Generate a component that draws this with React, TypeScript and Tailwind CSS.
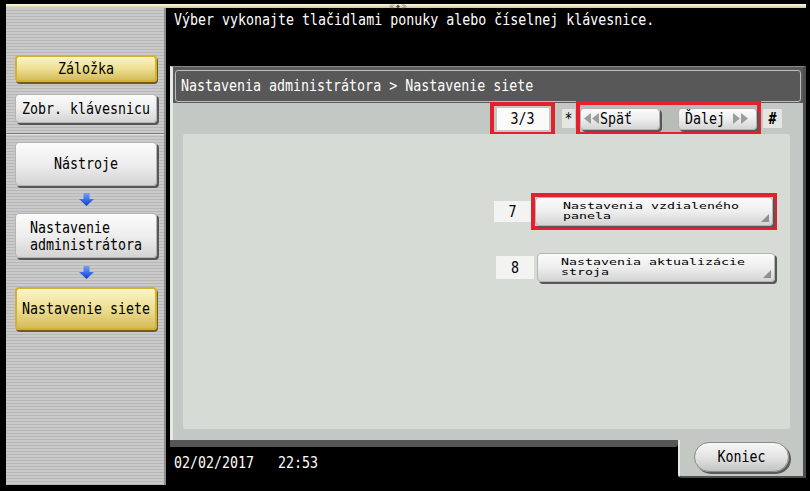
import React from "react";

const tall = "inline-block scale-y-[1.15]";

function BlueArrow() {
  return (
    <svg width="15" height="13" viewBox="0 0 15 13">
      <defs>
        <linearGradient id="ba" x1="0" y1="0" x2="0" y2="1">
          <stop offset="0" stopColor="#6fa0ff" />
          <stop offset="1" stopColor="#0a3fd0" />
        </linearGradient>
      </defs>
      <path d="M4.5 0h6v6h4.5L7.5 13 0 6h4.5z" fill="url(#ba)" />
    </svg>
  );
}

function DoubleArrow({ dir }: { dir: "left" | "right" }) {
  return (
    <svg width="15" height="11" viewBox="0 0 15 11">
      {dir === "left" ? (
        <path d="M7 0L0 5.5 7 11z M15 0L8 5.5 15 11z" fill="#9b9d9b" />
      ) : (
        <path d="M0 0l7 5.5L0 11z M8 0l7 5.5L8 11z" fill="#9b9d9b" />
      )}
    </svg>
  );
}

function Corner() {
  return (
    <svg className="absolute right-[3px] bottom-[3px]" width="8" height="8" viewBox="0 0 8 8">
      <path d="M8 0v8H0z" fill="#8e908e" />
    </svg>
  );
}

const grayBtn =
  "bg-linear-to-b from-[#fbfbfb] via-[#eeeeee] to-[#d4d4d4] border border-[#b4b4b4] rounded-[4px] shadow-[2px_2px_0_#575757]";
const yellowBtn =
  "bg-linear-to-b from-[#fbf4c4] via-[#eedf94] to-[#d4bc58] border-2 border-[#d3b232] rounded-[4px] shadow-[1px_2px_0_#6b5d1c]";

function MenuButton({ line1, line2, pl }: { line1: string; line2: string; pl: string }) {
  return (
    <div className={`relative w-[238px] h-[29px] flex items-center ${grayBtn} ${pl}`}>
      <span className="inline-block scale-y-[0.62] leading-[15.5px] text-black">
        {line1}
        <br />
        {line2}
      </span>
      <Corner />
    </div>
  );
}

export default function App() {
  return (
    <div className="w-[810px] h-[491px] bg-black overflow-hidden flex flex-col pt-[4px] pl-[6px] pr-[4px] pb-[6px] font-['DejaVu_Sans_Mono',monospace] text-[13.3px]">
      {/* top strip */}
      <div className="h-[4px] bg-linear-to-b from-[#fffbe3] to-[#cfc79a] flex justify-center pr-[16px]">
        <svg width="18" height="5" viewBox="0 0 18 5">
          <path d="M3 0.5L1 2.5 3 4.5 M5 0.5L3 2.5 5 4.5 M13 0.5L15 2.5 13 4.5 M15 0.5L17 2.5 15 4.5" stroke="#6a6a6a" strokeWidth="0.8" fill="none" />
          <path d="M9 0.5l2 2-2 2-2-2z" fill="#555" />
        </svg>
      </div>

      <div className="flex flex-1 min-h-0">
        {/* sidebar */}
        <aside className="w-[160px] flex flex-col border-r-2 border-[#8c8c8c] bg-[repeating-linear-gradient(to_bottom,#cacaca_0px,#cacaca_2px,#b7b7b7_2px,#b7b7b7_3px)]">
          <div className="h-[125px] pt-[47px] pl-[9px] flex flex-col gap-[12px]">
            <div className={`w-[142px] h-[27px] flex items-center justify-center text-black ${yellowBtn}`}>
              <span className={tall}>Záložka</span>
            </div>
            <div className={`w-[142px] h-[29px] flex items-center justify-center text-black ${grayBtn}`}>
              <span className={tall}>Zobr. klávesnicu</span>
            </div>
          </div>
          <div className="h-[2px] border-t border-[#7a7a7a] bg-[#e2e2e2]" />
          <div className="pt-[7px] pl-[9px] flex flex-col">
            <div className={`w-[142px] h-[44px] flex items-center justify-center text-black ${grayBtn}`}>
              <span className={tall}>Nástroje</span>
            </div>
            <div className="w-[142px] h-[27px] flex items-center justify-center">
              <BlueArrow />
            </div>
            <div className={`w-[142px] h-[45px] flex items-center pl-[14px] text-black ${grayBtn}`}>
              <span className={`${tall} leading-[15px]`}>
                Nastavenie
                <br />
                administrátora
              </span>
            </div>
            <div className="w-[142px] h-[29px] flex items-center justify-center">
              <BlueArrow />
            </div>
            <div className={`w-[142px] h-[43px] flex items-center justify-center text-black ${yellowBtn}`}>
              <span className={tall}>Nastavenie siete</span>
            </div>
          </div>
        </aside>

        {/* main */}
        <main className="flex-1 flex flex-col min-w-0">
          <div className="h-[58px] pl-[8px] pt-[4px] text-white leading-[16px]">
            <span className={tall}>Výber vykonajte tlačidlami ponuky alebo číselnej klávesnice.</span>
          </div>

          <div className="ml-[4px] h-[374px] flex flex-col border-l-[3px] border-l-[#e6eae6] border-r-[3px] border-r-[#4e4e4e] border-t border-t-[#888888] bg-[#c4c8c4]">
            <div className="bg-[#5b5b5b] pt-[3px] pl-[2px] pr-[2px] pb-[1px]">
              <div className="h-[32px] rounded-[3px] border border-[#bdbdbd] bg-[#585858] pl-[5px] flex items-center text-white">
                <span className={tall}>Nastavenia administrátora &gt; Nastavenie siete</span>
              </div>
            </div>

            {/* page counter + paging */}
            <div className="h-[31px] flex items-center justify-end pr-[21px] text-black">
              <div className="w-[65px] h-[34px] border-4 border-[#e3202b] flex items-center justify-center">
                <div className="w-[52px] h-[22px] bg-[#fafafa] flex items-center justify-center">
                  <span className={tall}>3/3</span>
                </div>
              </div>
              <div className="ml-[7px] w-[13px] h-[19px] bg-[#e4e6e4] flex items-center justify-center">
                <span className={tall}>*</span>
              </div>
              <div className="ml-[1px] w-[185px] h-[35px] border-4 border-[#e3202b] bg-[#b9bdb9] flex items-center">
                <div className={`w-[80px] h-[22px] flex items-center pl-[3px] gap-[1px] ${grayBtn} rounded-[3px]`}>
                  <DoubleArrow dir="left" />
                  <span className={tall}>Späť</span>
                </div>
                <div className={`ml-[18px] w-[79px] h-[22px] flex items-center pl-[6px] gap-[8px] ${grayBtn} rounded-[3px]`}>
                  <span className={tall}>Ďalej</span>
                  <DoubleArrow dir="right" />
                </div>
              </div>
              <div className="ml-[2px] w-[19px] h-[19px] bg-[#e4e6e4] flex items-center justify-center font-bold">
                <span className={tall}>#</span>
              </div>
            </div>

            <div className="flex-1 ml-[10px] mr-[13px] mb-[11px] rounded-[3px] bg-[#d7dbd6] flex flex-col items-end pt-[59px] pr-[13px] gap-[23px]">
              <div className="flex items-center">
                <div className="w-[37px] h-[21px] bg-[#f3f4f2] flex items-center justify-center text-black">
                  <span className={tall}>7</span>
                </div>
                <div className="border-4 border-[#e3202b]">
                  <MenuButton line1="Nastavenia vzdialeného" line2="panela" pl="pl-[27px]" />
                </div>
              </div>
              <div className="flex items-center pr-[2px]">
                <div className="w-[38px] h-[23px] bg-[#f3f4f2] flex items-center justify-center text-black">
                  <span className={tall}>8</span>
                </div>
                <div className="ml-[3px]">
                  <MenuButton line1="Nastavenia aktualizácie" line2="stroja" pl="pl-[23px]" />
                </div>
              </div>
            </div>
          </div>

          {/* footer: date + Koniec tab */}
          <div className="flex-1 flex">
            <div className="flex-1 ml-[4px] flex flex-col">
              <div className="h-[7px] bg-[#565656] rounded-br-[3px]" />
              <div className="pl-[4px] pt-[8px] text-white whitespace-pre leading-[16px]">
                <span className={tall}>02/02/2017   22:53</span>
              </div>
            </div>
            <div className="w-[128px] h-[38px] bg-[#c4c8c4] border-l-2 border-l-[#e6eae6] border-r-[3px] border-r-[#4e4e4e] border-b-2 border-b-[#4e4e4e] rounded-bl-[4px] pl-[14px] pt-[2px]">
              <div className="w-[95px] h-[30px] rounded-full bg-linear-to-b from-[#f6f6f6] via-[#e4e4e4] to-[#c2c4c2] border border-[#8a8a8a] shadow-[2px_2px_0_#5a5a5a] flex items-center justify-center text-black">
                <span className={tall}>Koniec</span>
              </div>
            </div>
          </div>
        </main>
      </div>
    </div>
  );
}
